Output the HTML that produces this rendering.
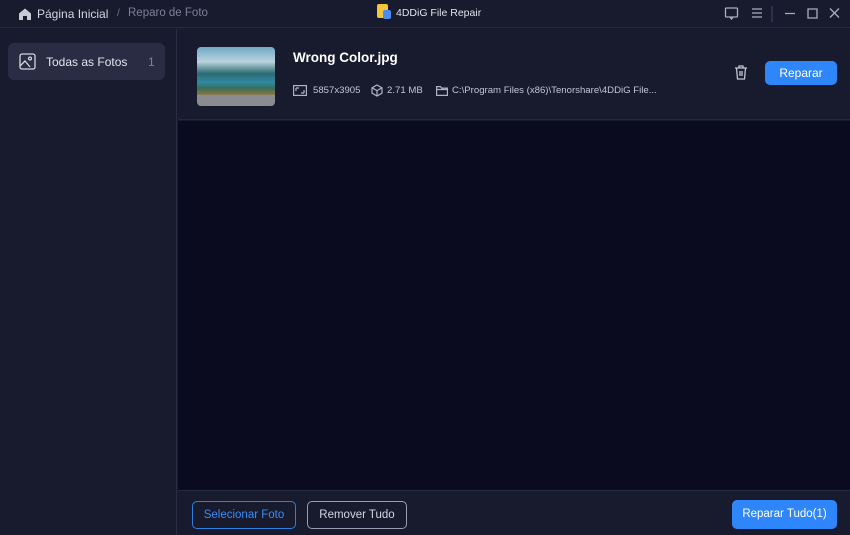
<!DOCTYPE html>
<html><head><meta charset="utf-8"><style>
*{margin:0;padding:0;box-sizing:border-box}
body{width:850px;height:535px;background:#181a2e;font-family:"Liberation Sans",sans-serif;position:relative;overflow:hidden;color:#fff}
.abs{position:absolute}
</style></head><body>
<div class="abs" style="left:0;top:0;width:850px;height:28px;background:#181a2e;border-bottom:1px solid #262a40"></div>
<svg class="abs" style="left:18px;top:7px" width="14" height="14" viewBox="0 0 14 14"><path d="M1 6.5L7 1.5L13 6.5V13H9V9H5V13H1Z" fill="#c8cad6"/></svg>
<div class="abs" style="left:37px;top:7px;font-size:12px;color:#d4d6e0">Página Inicial</div>
<div class="abs" style="left:117px;top:8px;font-size:10px;color:#777">/</div>
<div class="abs" style="left:128px;top:7px;font-size:11.5px;color:#7d8196">Reparo de Foto</div>
<div class="abs" style="left:377px;top:4px;width:11px;height:14px;background:#f3c53c;border-radius:2px"></div>
<div class="abs" style="left:383px;top:10px;width:8px;height:9px;background:#4a8cf0;border-radius:2px"></div>
<div class="abs" style="left:396px;top:7px;font-size:10.5px;color:#e0e2ea">4DDiG File Repair</div>
<svg class="abs" style="left:724px;top:6px" width="120" height="16" viewBox="0 0 120 16" fill="none" stroke="#a9adbd" stroke-width="1.3"><rect x="1.5" y="2" width="12" height="9" rx="1"/><path d="M6 11l1.5 2 1.5-2"/><path d="M28 3h10M28 7h10M28 11h10"/><path d="M48 0v16" stroke="#3a3e55"/><path d="M61 7.5h10M84 3h9v9h-9zM106 2.5l9 9M115 2.5l-9 9"/></svg>
<div class="abs" style="left:0;top:29px;width:177px;height:506px;background:#181a2e;border-right:1px solid #2a2e45"></div>
<div class="abs" style="left:8px;top:43px;width:157px;height:37px;background:#2a2c43;border-radius:6px"></div>
<svg class="abs" style="left:19px;top:53px" width="17" height="17" viewBox="0 0 17 17" fill="none" stroke="#d4d6e0" stroke-width="1.3"><rect x="1" y="1" width="15" height="15" rx="2"/><circle cx="11" cy="5.5" r="1.5"/><path d="M1 13l5-5 5 6"/></svg>
<div class="abs" style="left:46px;top:55px;font-size:12px;color:#e4e6ee">Todas as Fotos</div>
<div class="abs" style="left:148px;top:55px;font-size:12px;color:#7d8196">1</div>
<div class="abs" style="left:178px;top:29px;width:672px;height:91px;background:#181a2e;border-bottom:1px solid #262a40"></div>
<div class="abs" style="left:197px;top:47px;width:78px;height:59px;border-radius:4px;overflow:hidden;background:linear-gradient(#6fa8c4 0%,#b9d3de 25%,#2d6a72 45%,#2f8aa0 60%,#3a6d5a 70%,#827540 80%,#8a8c90 82%,#8a8c90 100%)"></div>
<div class="abs" style="left:293px;top:50px;font-size:13.5px;font-weight:bold;color:#fff">Wrong Color.jpg</div>
<svg class="abs" style="left:293px;top:85px" width="14" height="11" viewBox="0 0 14 11" fill="none" stroke="#b0b3c2" stroke-width="1.2"><rect x="0.6" y="0.6" width="12.8" height="9.8"/><path d="M3 3h3M3 3v3M11 8H8M11 8V5"/></svg>
<div class="abs" style="left:313px;top:85px;font-size:9.6px;color:#c3c6d2">5857x3905</div>
<svg class="abs" style="left:371px;top:84px" width="12" height="13" viewBox="0 0 12 13" fill="none" stroke="#b0b3c2" stroke-width="1.2"><path d="M6 1l5 2.8v5.4L6 12 1 9.2V3.8zM1 3.8l5 2.8 5-2.8M6 6.6V12"/></svg>
<div class="abs" style="left:387px;top:85px;font-size:9.6px;color:#c3c6d2">2.71 MB</div>
<svg class="abs" style="left:436px;top:86px" width="12" height="10" viewBox="0 0 12 10" fill="none" stroke="#b0b3c2" stroke-width="1.2"><path d="M0.6 0.6h4l1 1.5h5.8v7.3H0.6zM0.6 3.5h10.8"/></svg>
<div class="abs" style="left:452px;top:85px;font-size:9.6px;color:#c3c6d2">C:\Program Files (x86)\Tenorshare\4DDiG File...</div>
<svg class="abs" style="left:734px;top:65px" width="14" height="15" viewBox="0 0 14 15" fill="none" stroke="#c3c6d2" stroke-width="1.3"><path d="M1 3h12M5 3V1h4v2M2.5 3l1 11h7l1-11M6 6v5M8 6v5"/></svg>
<div class="abs" style="left:765px;top:61px;width:72px;height:24px;background:#2f86fa;border-radius:5px;font-size:12px;color:#fff;text-align:center;line-height:24px">Reparar</div>
<div class="abs" style="left:178px;top:121px;width:672px;height:369px;background:#0a0b1f"></div>
<div class="abs" style="left:178px;top:490px;width:672px;height:45px;background:#181a2e;border-top:1px solid #262a40"></div>
<div class="abs" style="left:192px;top:501px;width:104px;height:28px;border:1px solid #2f7de0;border-radius:5px;font-size:11.5px;color:#3b8cf5;text-align:center;line-height:26px">Selecionar Foto</div>
<div class="abs" style="left:307px;top:501px;width:100px;height:28px;border:1px solid #9a9dab;border-radius:5px;font-size:11.5px;color:#d4d6e0;text-align:center;line-height:26px">Remover Tudo</div>
<div class="abs" style="left:732px;top:500px;width:105px;height:29px;background:#2f86fa;border-radius:5px;font-size:11.5px;color:#fff;text-align:center;line-height:29px">Reparar Tudo(1)</div>
</body></html>
